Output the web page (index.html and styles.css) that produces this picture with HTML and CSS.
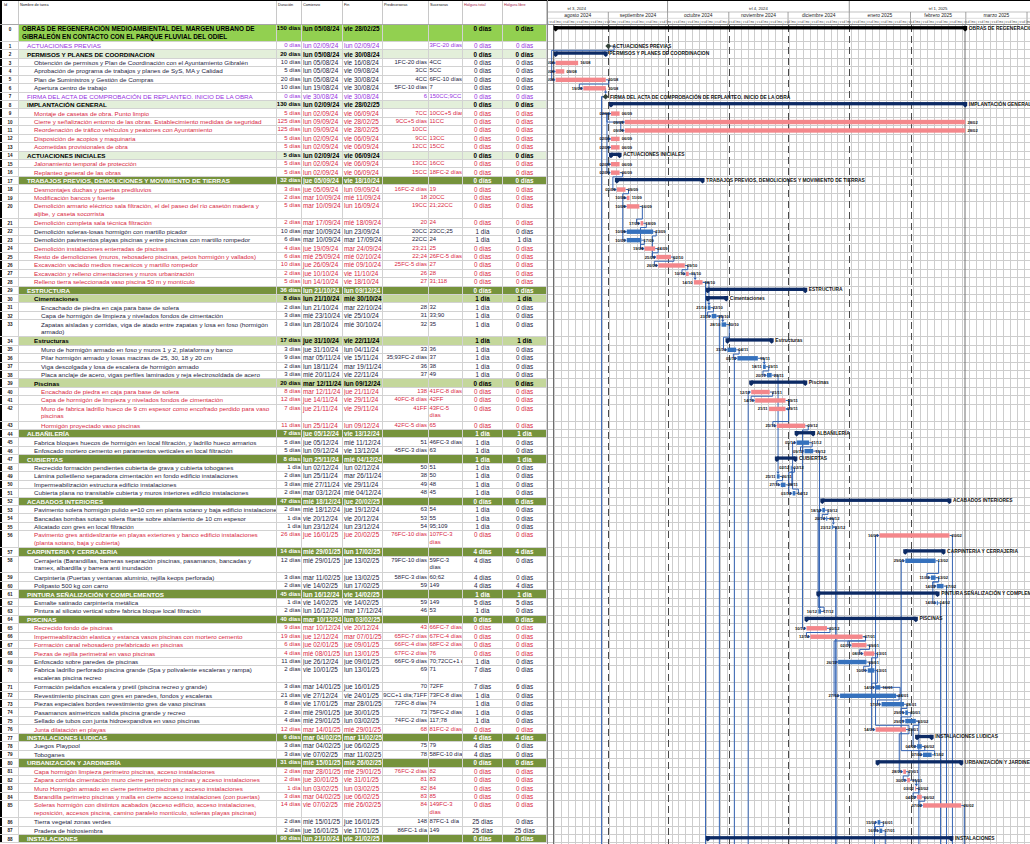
FILE: index.html
```html
<!DOCTYPE html>
<html lang="es">
<head>
<meta charset="utf-8">
<title>Diagrama de Gantt</title>
<link rel="stylesheet" href="styles.css">
</head>
<body>
<div class="page">
<div class="table">
<div class="head"><span class="hid">Id</span><span>Nombre de tarea</span><span>Duración</span><span>Comienzo</span><span>Fin</span><span>Predecesoras</span><span>Sucesoras</span><span class="hred">Holgura total</span><span class="hred">Holgura libre</span></div>
<div class="row sum0 r2"><span class="c id">0</span><span class="c nm l0">OBRAS DE REGENERACIÓN MEDIOAMBIENTAL DEL MARGEN URBANO DE <br>GIBRALEÓN EN CONTACTO CON EL PARQUE FLUVIAL DEL ODIEL</span><span class="c du">150 días</span><span class="c st">lun 05/08/24</span><span class="c en">vie 28/02/25</span><span class="c pr"></span><span class="c su"></span><span class="c ht">0 días</span><span class="c hl">0 días</span></div>
<div class="row mile" data-mx="61.3"><span class="c id">1</span><span class="c nm l1">ACTUACIONES PREVIAS</span><span class="c du">0 días</span><span class="c st">lun 02/09/24</span><span class="c en">lun 02/09/24</span><span class="c pr"></span><span class="c su">3FC-20 días</span><span class="c ht">0 días</span><span class="c hl">0 días</span></div>
<div class="row sumL"><span class="c id">2</span><span class="c nm l1">PERMISOS Y PLANES DE COORDINACION</span><span class="c du">20 días</span><span class="c st">lun 05/08/24</span><span class="c en">vie 30/08/24</span><span class="c pr"></span><span class="c su"></span><span class="c ht">0 días</span><span class="c hl">0 días</span></div>
<div class="row task"><span class="c id">3</span><span class="c nm l2">Obtención de permisos y Plan de Coordinación con el Ayuntamiento Gibralén</span><span class="c du">10 días</span><span class="c st">lun 05/08/24</span><span class="c en">vie 16/08/24</span><span class="c pr">1FC-20 días</span><span class="c su">4CC</span><span class="c ht">0 días</span><span class="c hl">0 días</span></div>
<div class="row task"><span class="c id">4</span><span class="c nm l2">Aprobación de programa de trabajos y planes de SyS, MA y Calidad</span><span class="c du">5 días</span><span class="c st">lun 05/08/24</span><span class="c en">vie 09/08/24</span><span class="c pr">3CC</span><span class="c su">5CC</span><span class="c ht">0 días</span><span class="c hl">0 días</span></div>
<div class="row task"><span class="c id">5</span><span class="c nm l2">Plan de Suministros y Gestión de Compras</span><span class="c du">20 días</span><span class="c st">lun 05/08/24</span><span class="c en">vie 30/08/24</span><span class="c pr">4CC</span><span class="c su">6FC-10 días</span><span class="c ht">0 días</span><span class="c hl">0 días</span></div>
<div class="row task"><span class="c id">6</span><span class="c nm l2">Apertura centro de trabajo</span><span class="c du">10 días</span><span class="c st">lun 19/08/24</span><span class="c en">vie 30/08/24</span><span class="c pr">5FC-10 días</span><span class="c su">7</span><span class="c ht">0 días</span><span class="c hl">0 días</span></div>
<div class="row mile" data-mx="58.6"><span class="c id">7</span><span class="c nm l1">FIRMA DEL ACTA DE COMPROBACIÓN DE REPLANTEO. INICIO DE LA OBRA</span><span class="c du">0 días</span><span class="c st">vie 30/08/24</span><span class="c en">vie 30/08/24</span><span class="c pr">6</span><span class="c su">150CC;9CC</span><span class="c ht">0 días</span><span class="c hl">0 días</span></div>
<div class="row sumL"><span class="c id">8</span><span class="c nm l1">IMPLANTACIÓN GENERAL</span><span class="c du">130 días</span><span class="c st">lun 02/09/24</span><span class="c en">vie 28/02/25</span><span class="c pr"></span><span class="c su"></span><span class="c ht">0 días</span><span class="c hl">0 días</span></div>
<div class="row task crit"><span class="c id">9</span><span class="c nm l2">Montaje de casetas de obra. Punto limpio</span><span class="c du">5 días</span><span class="c st">lun 02/09/24</span><span class="c en">vie 06/09/24</span><span class="c pr">7CC</span><span class="c su">10CC+5 días</span><span class="c ht">0 días</span><span class="c hl">0 días</span></div>
<div class="row task crit"><span class="c id">10</span><span class="c nm l2">Cierre y señalización entorno de las obras. Establecimiento medidas de seguridad</span><span class="c du">125 días</span><span class="c st">lun 09/09/24</span><span class="c en">vie 28/02/25</span><span class="c pr">9CC+5 días</span><span class="c su">11CC</span><span class="c ht">0 días</span><span class="c hl">0 días</span></div>
<div class="row task crit"><span class="c id">11</span><span class="c nm l2">Reordenación de tráfico vehículos y peatones con Ayuntamiento</span><span class="c du">125 días</span><span class="c st">lun 09/09/24</span><span class="c en">vie 28/02/25</span><span class="c pr">10CC</span><span class="c su"></span><span class="c ht">0 días</span><span class="c hl">0 días</span></div>
<div class="row task crit"><span class="c id">12</span><span class="c nm l2">Disposición de acopios y maquinaria</span><span class="c du">5 días</span><span class="c st">lun 02/09/24</span><span class="c en">vie 06/09/24</span><span class="c pr">9CC</span><span class="c su">13CC</span><span class="c ht">0 días</span><span class="c hl">0 días</span></div>
<div class="row task crit"><span class="c id">13</span><span class="c nm l2">Acometidas provisionales de obra</span><span class="c du">5 días</span><span class="c st">lun 02/09/24</span><span class="c en">vie 06/09/24</span><span class="c pr">12CC</span><span class="c su">15CC</span><span class="c ht">0 días</span><span class="c hl">0 días</span></div>
<div class="row sumL"><span class="c id">14</span><span class="c nm l1">ACTUACIONES INICIALES</span><span class="c du">5 días</span><span class="c st">lun 02/09/24</span><span class="c en">vie 06/09/24</span><span class="c pr"></span><span class="c su"></span><span class="c ht">0 días</span><span class="c hl">0 días</span></div>
<div class="row task crit"><span class="c id">15</span><span class="c nm l2">Jalonamiento temporal de protección</span><span class="c du">5 días</span><span class="c st">lun 02/09/24</span><span class="c en">vie 06/09/24</span><span class="c pr">13CC</span><span class="c su">16CC</span><span class="c ht">0 días</span><span class="c hl">0 días</span></div>
<div class="row task crit"><span class="c id">16</span><span class="c nm l2">Replanteo general de las obras</span><span class="c du">5 días</span><span class="c st">lun 02/09/24</span><span class="c en">vie 06/09/24</span><span class="c pr">15CC</span><span class="c su">18FC-2 días</span><span class="c ht">0 días</span><span class="c hl">0 días</span></div>
<div class="row sumD"><span class="c id">17</span><span class="c nm l1">TRABAJOS PREVIOS, DEMOLICIONES Y MOVIMIENTO DE TIERRAS</span><span class="c du">32 días</span><span class="c st">jue 05/09/24</span><span class="c en">vie 18/10/24</span><span class="c pr"></span><span class="c su"></span><span class="c ht">0 días</span><span class="c hl">0 días</span></div>
<div class="row task crit"><span class="c id">18</span><span class="c nm l2">Desmontajes duchas y puertas prediluvios</span><span class="c du">3 días</span><span class="c st">jue 05/09/24</span><span class="c en">lun 09/09/24</span><span class="c pr">16FC-2 días</span><span class="c su">19</span><span class="c ht">0 días</span><span class="c hl">0 días</span></div>
<div class="row task crit"><span class="c id">19</span><span class="c nm l2">Modificación bancos y fuente</span><span class="c du">2 días</span><span class="c st">mar 10/09/24</span><span class="c en">mié 11/09/24</span><span class="c pr">18</span><span class="c su">20CC</span><span class="c ht">0 días</span><span class="c hl">0 días</span></div>
<div class="row task crit r2"><span class="c id">20</span><span class="c nm l2">Demolición armario eléctrico sala filtración, el del paseo del río casetón madera y <br>aljibe, y caseta socorrista</span><span class="c du">5 días</span><span class="c st">mar 10/09/24</span><span class="c en">lun 16/09/24</span><span class="c pr">19CC</span><span class="c su">21;22CC</span><span class="c ht">0 días</span><span class="c hl">0 días</span></div>
<div class="row task crit"><span class="c id">21</span><span class="c nm l2">Demolición completa sala técnica filtración</span><span class="c du">2 días</span><span class="c st">mar 17/09/24</span><span class="c en">mié 18/09/24</span><span class="c pr">20</span><span class="c su">24</span><span class="c ht">0 días</span><span class="c hl">0 días</span></div>
<div class="row task"><span class="c id">22</span><span class="c nm l2">Demolición soleras-losas hormigón con martillo picador</span><span class="c du">10 días</span><span class="c st">mar 10/09/24</span><span class="c en">lun 23/09/24</span><span class="c pr">20CC</span><span class="c su">23CC;25</span><span class="c ht">1 día</span><span class="c hl">0 días</span></div>
<div class="row task"><span class="c id">23</span><span class="c nm l2">Demolición pavimentos playas piscinas y entre piscinas con martillo rompedor</span><span class="c du">6 días</span><span class="c st">mar 10/09/24</span><span class="c en">mar 17/09/24</span><span class="c pr">22CC</span><span class="c su">24</span><span class="c ht">1 día</span><span class="c hl">1 día</span></div>
<div class="row task crit"><span class="c id">24</span><span class="c nm l2">Demolición instalaciones enterradas de piscinas</span><span class="c du">4 días</span><span class="c st">jue 19/09/24</span><span class="c en">mar 24/09/24</span><span class="c pr">23;21</span><span class="c su">25</span><span class="c ht">0 días</span><span class="c hl">0 días</span></div>
<div class="row task crit"><span class="c id">25</span><span class="c nm l2">Resto de demoliciones (muros, rebosadero piscinas, petos hormigón y vallados)</span><span class="c du">6 días</span><span class="c st">mié 25/09/24</span><span class="c en">mié 02/10/24</span><span class="c pr">22;24</span><span class="c su">26FC-5 días</span><span class="c ht">0 días</span><span class="c hl">0 días</span></div>
<div class="row task crit"><span class="c id">26</span><span class="c nm l2">Excavación vaciado medios mecanicos y martillo rompedor</span><span class="c du">10 días</span><span class="c st">jue 26/09/24</span><span class="c en">mié 09/10/24</span><span class="c pr">25FC-5 días</span><span class="c su">27</span><span class="c ht">0 días</span><span class="c hl">0 días</span></div>
<div class="row task crit"><span class="c id">27</span><span class="c nm l2">Excavación y relleno cimentaciones y muros urbanización</span><span class="c du">2 días</span><span class="c st">jue 10/10/24</span><span class="c en">vie 11/10/24</span><span class="c pr">26</span><span class="c su">28</span><span class="c ht">0 días</span><span class="c hl">0 días</span></div>
<div class="row task crit"><span class="c id">28</span><span class="c nm l2">Relleno tierra seleccionada vaso piscina 50 m y montículo</span><span class="c du">5 días</span><span class="c st">lun 14/10/24</span><span class="c en">vie 18/10/24</span><span class="c pr">27</span><span class="c su">31;118</span><span class="c ht">0 días</span><span class="c hl">0 días</span></div>
<div class="row sumD"><span class="c id">29</span><span class="c nm l1">ESTRUCTURA</span><span class="c du">36 días</span><span class="c st">lun 21/10/24</span><span class="c en">lun 09/12/24</span><span class="c pr"></span><span class="c su"></span><span class="c ht">0 días</span><span class="c hl">0 días</span></div>
<div class="row sumM"><span class="c id">30</span><span class="c nm l2">Cimentaciones</span><span class="c du">8 días</span><span class="c st">lun 21/10/24</span><span class="c en">mié 30/10/24</span><span class="c pr"></span><span class="c su"></span><span class="c ht">1 día</span><span class="c hl">1 día</span></div>
<div class="row task"><span class="c id">31</span><span class="c nm l3">Encachado de piedra en caja para base de solera</span><span class="c du">2 días</span><span class="c st">lun 21/10/24</span><span class="c en">mar 22/10/24</span><span class="c pr">28</span><span class="c su">32</span><span class="c ht">1 día</span><span class="c hl">0 días</span></div>
<div class="row task"><span class="c id">32</span><span class="c nm l3">Capa de hormigón de limpieza y nivelados fondos de cimentación</span><span class="c du">3 días</span><span class="c st">mié 23/10/24</span><span class="c en">vie 25/10/24</span><span class="c pr">31</span><span class="c su">33;90</span><span class="c ht">1 día</span><span class="c hl">0 días</span></div>
<div class="row task r2"><span class="c id">33</span><span class="c nm l3">Zapatas aisladas y corridas, viga de atado entre zapatas y losa en foso (hormigón <br>armado)</span><span class="c du">3 días</span><span class="c st">lun 28/10/24</span><span class="c en">mié 30/10/24</span><span class="c pr">32</span><span class="c su">35</span><span class="c ht">1 día</span><span class="c hl">0 días</span></div>
<div class="row sumM"><span class="c id">34</span><span class="c nm l2">Estructuras</span><span class="c du">17 días</span><span class="c st">jue 31/10/24</span><span class="c en">vie 22/11/24</span><span class="c pr"></span><span class="c su"></span><span class="c ht">1 día</span><span class="c hl">1 día</span></div>
<div class="row task"><span class="c id">35</span><span class="c nm l3">Muro de hormigón armado en foso y muros 1 y 2, plataforma y banco</span><span class="c du">3 días</span><span class="c st">jue 31/10/24</span><span class="c en">lun 04/11/24</span><span class="c pr">33</span><span class="c su">36</span><span class="c ht">1 día</span><span class="c hl">0 días</span></div>
<div class="row task"><span class="c id">36</span><span class="c nm l3">Pilar hormigón armado y losas macizas de 25, 30, 18 y 20 cm</span><span class="c du">9 días</span><span class="c st">mar 05/11/24</span><span class="c en">vie 15/11/24</span><span class="c pr">35;93FC-2 días</span><span class="c su">37</span><span class="c ht">1 día</span><span class="c hl">0 días</span></div>
<div class="row task"><span class="c id">37</span><span class="c nm l3">Viga descolgada y losa de escalera de hormigón armado</span><span class="c du">2 días</span><span class="c st">lun 18/11/24</span><span class="c en">mar 19/11/24</span><span class="c pr">36</span><span class="c su">38</span><span class="c ht">1 día</span><span class="c hl">0 días</span></div>
<div class="row task"><span class="c id">38</span><span class="c nm l3">Placa anclaje de acero, vigas perfiles laminados y reja electrosoldada de acero</span><span class="c du">3 días</span><span class="c st">mié 20/11/24</span><span class="c en">vie 22/11/24</span><span class="c pr">37</span><span class="c su">49</span><span class="c ht">1 día</span><span class="c hl">0 días</span></div>
<div class="row sumM"><span class="c id">39</span><span class="c nm l2">Piscinas</span><span class="c du">20 días</span><span class="c st">mar 12/11/24</span><span class="c en">lun 09/12/24</span><span class="c pr"></span><span class="c su"></span><span class="c ht">0 días</span><span class="c hl">0 días</span></div>
<div class="row task crit"><span class="c id">40</span><span class="c nm l3">Encachado de piedra en caja para base de solera</span><span class="c du">8 días</span><span class="c st">mar 12/11/24</span><span class="c en">jue 21/11/24</span><span class="c pr">138</span><span class="c su">41FC-8 días</span><span class="c ht">0 días</span><span class="c hl">0 días</span></div>
<div class="row task crit"><span class="c id">41</span><span class="c nm l3">Capa de hormigón de limpieza y nivelados fondos de cimentación</span><span class="c du">12 días</span><span class="c st">jue 14/11/24</span><span class="c en">vie 29/11/24</span><span class="c pr">40FC-8 días</span><span class="c su">42FF</span><span class="c ht">0 días</span><span class="c hl">0 días</span></div>
<div class="row task crit r2"><span class="c id">42</span><span class="c nm l3">Muro de fabrica ladrillo hueco de 9 cm espesor como encofrado perdido para vaso <br>piscinas</span><span class="c du">7 días</span><span class="c st">jue 21/11/24</span><span class="c en">vie 29/11/24</span><span class="c pr">41FF</span><span class="c su">43FC-5<br>días</span><span class="c ht">0 días</span><span class="c hl">0 días</span></div>
<div class="row task crit"><span class="c id">43</span><span class="c nm l3">Hormigón proyectado vaso piscinas</span><span class="c du">11 días</span><span class="c st">lun 25/11/24</span><span class="c en">lun 09/12/24</span><span class="c pr">42FC-5 días</span><span class="c su">65</span><span class="c ht">0 días</span><span class="c hl">0 días</span></div>
<div class="row sumD"><span class="c id">44</span><span class="c nm l1">ALBAÑILERÍA</span><span class="c du">7 días</span><span class="c st">jue 05/12/24</span><span class="c en">vie 13/12/24</span><span class="c pr"></span><span class="c su"></span><span class="c ht">1 día</span><span class="c hl">1 día</span></div>
<div class="row task"><span class="c id">45</span><span class="c nm l2">Fabrica bloques huecos de hormigón en local filtración, y ladrillo hueco armarios</span><span class="c du">5 días</span><span class="c st">jue 05/12/24</span><span class="c en">mié 11/12/24</span><span class="c pr">51</span><span class="c su">46FC-3 días</span><span class="c ht">1 día</span><span class="c hl">0 días</span></div>
<div class="row task"><span class="c id">46</span><span class="c nm l2">Enfoscado mortero cemento en paramentos verticales en local filtración</span><span class="c du">5 días</span><span class="c st">lun 09/12/24</span><span class="c en">vie 13/12/24</span><span class="c pr">45FC-3 días</span><span class="c su">63</span><span class="c ht">1 día</span><span class="c hl">0 días</span></div>
<div class="row sumD"><span class="c id">47</span><span class="c nm l1">CUBIERTAS</span><span class="c du">8 días</span><span class="c st">lun 25/11/24</span><span class="c en">mié 04/12/24</span><span class="c pr"></span><span class="c su"></span><span class="c ht">1 día</span><span class="c hl">1 día</span></div>
<div class="row task"><span class="c id">48</span><span class="c nm l2">Recrecido formación pendientes cubierta de grava y cubierta toboganes</span><span class="c du">1 día</span><span class="c st">lun 02/12/24</span><span class="c en">lun 02/12/24</span><span class="c pr">50</span><span class="c su">51</span><span class="c ht">1 día</span><span class="c hl">0 días</span></div>
<div class="row task"><span class="c id">49</span><span class="c nm l2">Lámina polietileno separadora cimentación en fondo edificio instalaciones</span><span class="c du">2 días</span><span class="c st">lun 25/11/24</span><span class="c en">mar 26/11/24</span><span class="c pr">38</span><span class="c su">50</span><span class="c ht">1 día</span><span class="c hl">0 días</span></div>
<div class="row task"><span class="c id">50</span><span class="c nm l2">Impermeabilización estructura edificio instalaciones</span><span class="c du">3 días</span><span class="c st">mié 27/11/24</span><span class="c en">vie 29/11/24</span><span class="c pr">49</span><span class="c su">48</span><span class="c ht">1 día</span><span class="c hl">0 días</span></div>
<div class="row task"><span class="c id">51</span><span class="c nm l2">Cubierta plana no transitable cubierta y muros interiores edificio instalaciones</span><span class="c du">2 días</span><span class="c st">mar 03/12/24</span><span class="c en">mié 04/12/24</span><span class="c pr">48</span><span class="c su">45</span><span class="c ht">1 día</span><span class="c hl">0 días</span></div>
<div class="row sumD"><span class="c id">52</span><span class="c nm l1">ACABADOS INTERIORES</span><span class="c du">47 días</span><span class="c st">mié 18/12/24</span><span class="c en">jue 20/02/25</span><span class="c pr"></span><span class="c su"></span><span class="c ht">0 días</span><span class="c hl">0 días</span></div>
<div class="row task"><span class="c id">53</span><span class="c nm l2">Pavimento solera hormigón pulido e=10 cm en planta sotano y baja edificio instalaciones</span><span class="c du">2 días</span><span class="c st">mié 18/12/24</span><span class="c en">jue 19/12/24</span><span class="c pr">63</span><span class="c su">54</span><span class="c ht">1 día</span><span class="c hl">0 días</span></div>
<div class="row task"><span class="c id">54</span><span class="c nm l2">Bancadas bombas sotano solera fltante sobre aislamiento de 10 cm espesor</span><span class="c du">1 día</span><span class="c st">vie 20/12/24</span><span class="c en">vie 20/12/24</span><span class="c pr">53</span><span class="c su">55</span><span class="c ht">1 día</span><span class="c hl">0 días</span></div>
<div class="row task"><span class="c id">55</span><span class="c nm l2">Alicatado con gres en local filtración</span><span class="c du">1 día</span><span class="c st">lun 23/12/24</span><span class="c en">lun 23/12/24</span><span class="c pr">54</span><span class="c su">95;109</span><span class="c ht">1 día</span><span class="c hl">0 días</span></div>
<div class="row task crit r2"><span class="c id">56</span><span class="c nm l2">Pavimento gres antideslizante en playas exteriores y banco edificio instalaciones <br>(planta sotano, baja y cubierta)</span><span class="c du">26 días</span><span class="c st">jue 16/01/25</span><span class="c en">jue 20/02/25</span><span class="c pr">76FC-10 días</span><span class="c su">107FC-3<br>días</span><span class="c ht">0 días</span><span class="c hl">0 días</span></div>
<div class="row sumD"><span class="c id">57</span><span class="c nm l1">CARPINTERIA Y CERRAJERIA</span><span class="c du">14 días</span><span class="c st">mié 29/01/25</span><span class="c en">lun 17/02/25</span><span class="c pr"></span><span class="c su"></span><span class="c ht">4 días</span><span class="c hl">4 días</span></div>
<div class="row task r2"><span class="c id">58</span><span class="c nm l2">Cerrajería (Barandillas, barreras separación piscinas, pasamanos, bancadas y <br>tramex, albardilla y barrera anti inundación</span><span class="c du">12 días</span><span class="c st">mié 29/01/25</span><span class="c en">jue 13/02/25</span><span class="c pr">79FC-10 días</span><span class="c su">59FC-3<br>días</span><span class="c ht">4 días</span><span class="c hl">0 días</span></div>
<div class="row task"><span class="c id">59</span><span class="c nm l2">Carpintería (Puertas y ventanas aluminio, rejilla keops perforada)</span><span class="c du">3 días</span><span class="c st">mar 11/02/25</span><span class="c en">jue 13/02/25</span><span class="c pr">58FC-3 días</span><span class="c su">60;62</span><span class="c ht">4 días</span><span class="c hl">0 días</span></div>
<div class="row task"><span class="c id">60</span><span class="c nm l2">Polipasto 500 kg con carro</span><span class="c du">2 días</span><span class="c st">vie 14/02/25</span><span class="c en">lun 17/02/25</span><span class="c pr">59</span><span class="c su">149</span><span class="c ht">4 días</span><span class="c hl">4 días</span></div>
<div class="row sumD"><span class="c id">61</span><span class="c nm l1">PINTURA SEÑALIZACIÓN Y COMPLEMENTOS</span><span class="c du">45 días</span><span class="c st">lun 16/12/24</span><span class="c en">vie 14/02/25</span><span class="c pr"></span><span class="c su"></span><span class="c ht">1 día</span><span class="c hl">1 día</span></div>
<div class="row task"><span class="c id">62</span><span class="c nm l2">Esmalte satinado carpintería metálica</span><span class="c du">1 día</span><span class="c st">vie 14/02/25</span><span class="c en">vie 14/02/25</span><span class="c pr">59</span><span class="c su">149</span><span class="c ht">5 días</span><span class="c hl">5 días</span></div>
<div class="row task"><span class="c id">63</span><span class="c nm l2">Pintura al silicato vertical sobre fabrica bloque local filtración</span><span class="c du">2 días</span><span class="c st">lun 16/12/24</span><span class="c en">mar 17/12/24</span><span class="c pr">46</span><span class="c su">53</span><span class="c ht">1 día</span><span class="c hl">0 días</span></div>
<div class="row sumD"><span class="c id">64</span><span class="c nm l1">PISCINAS</span><span class="c du">40 días</span><span class="c st">mar 10/12/24</span><span class="c en">lun 03/02/25</span><span class="c pr"></span><span class="c su"></span><span class="c ht">0 días</span><span class="c hl">0 días</span></div>
<div class="row task crit"><span class="c id">65</span><span class="c nm l2">Recrecido fondo de piscinas</span><span class="c du">9 días</span><span class="c st">mar 10/12/24</span><span class="c en">vie 20/12/24</span><span class="c pr">43</span><span class="c su">66FC-7 días</span><span class="c ht">0 días</span><span class="c hl">0 días</span></div>
<div class="row task crit"><span class="c id">66</span><span class="c nm l2">Impermeabilización elastica y estanca vasos piscinas con mortero cemento</span><span class="c du">19 días</span><span class="c st">jue 12/12/24</span><span class="c en">mar 07/01/25</span><span class="c pr">65FC-7 días</span><span class="c su">67FC-4 días</span><span class="c ht">0 días</span><span class="c hl">0 días</span></div>
<div class="row task crit"><span class="c id">67</span><span class="c nm l2">Formación canal rebosadero prefabricado en piscinas</span><span class="c du">6 días</span><span class="c st">jue 02/01/25</span><span class="c en">jue 09/01/25</span><span class="c pr">66FC-4 días</span><span class="c su">68FC-2 días</span><span class="c ht">0 días</span><span class="c hl">0 días</span></div>
<div class="row task crit"><span class="c id">68</span><span class="c nm l2">Piezas de rejilla perimetral en vaso piscinas</span><span class="c du">4 días</span><span class="c st">mié 08/01/25</span><span class="c en">lun 13/01/25</span><span class="c pr">67FC-2 días</span><span class="c su">76</span><span class="c ht">0 días</span><span class="c hl">0 días</span></div>
<div class="row task"><span class="c id">69</span><span class="c nm l2">Enfoscado sobre paredes de piscinas</span><span class="c du">11 días</span><span class="c st">jue 26/12/24</span><span class="c en">jue 09/01/25</span><span class="c pr">66FC-9 días</span><span class="c su">70;72CC+1 día</span><span class="c ht">1 día</span><span class="c hl">0 días</span></div>
<div class="row task r2"><span class="c id">70</span><span class="c nm l2">Fabrica ladrillo perforado piscina grande (Spa y polivalente escaleras y rampa) <br>escaleras piscina recreo</span><span class="c du">2 días</span><span class="c st">vie 10/01/25</span><span class="c en">lun 13/01/25</span><span class="c pr">69</span><span class="c su">71</span><span class="c ht">7 días</span><span class="c hl">0 días</span></div>
<div class="row task"><span class="c id">71</span><span class="c nm l2">Formación peldaños escalera y pretil (piscina recreo y grande)</span><span class="c du">3 días</span><span class="c st">mar 14/01/25</span><span class="c en">jue 16/01/25</span><span class="c pr">70</span><span class="c su">72FF</span><span class="c ht">7 días</span><span class="c hl">6 días</span></div>
<div class="row task"><span class="c id">72</span><span class="c nm l2">Revestimiento piscinas con gres en paredes, fondos y escaleras</span><span class="c du">21 días</span><span class="c st">vie 27/12/24</span><span class="c en">vie 24/01/25</span><span class="c pr">69CC+1 día;71FF</span><span class="c su">73FC-8 días</span><span class="c ht">1 día</span><span class="c hl">0 días</span></div>
<div class="row task"><span class="c id">73</span><span class="c nm l2">Piezas especiales bordes revestimiento gres de vaso piscinas</span><span class="c du">8 días</span><span class="c st">vie 17/01/25</span><span class="c en">mar 28/01/25</span><span class="c pr">72FC-8 días</span><span class="c su">74</span><span class="c ht">1 día</span><span class="c hl">0 días</span></div>
<div class="row task"><span class="c id">74</span><span class="c nm l2">Pasamanos asimetricos salida piscina grande y recreo</span><span class="c du">2 días</span><span class="c st">mié 29/01/25</span><span class="c en">jue 30/01/25</span><span class="c pr">73</span><span class="c su">75FC-2 días</span><span class="c ht">1 día</span><span class="c hl">0 días</span></div>
<div class="row task"><span class="c id">75</span><span class="c nm l2">Sellado de tubos con junta hidroexpandiva en vaso piscinas</span><span class="c du">4 días</span><span class="c st">mié 29/01/25</span><span class="c en">lun 03/02/25</span><span class="c pr">74FC-2 días</span><span class="c su">117;78</span><span class="c ht">1 día</span><span class="c hl">0 días</span></div>
<div class="row task crit"><span class="c id">76</span><span class="c nm l2">Junta dilatación en playas</span><span class="c du">12 días</span><span class="c st">mar 14/01/25</span><span class="c en">mié 29/01/25</span><span class="c pr">68</span><span class="c su">81FC-2 días</span><span class="c ht">0 días</span><span class="c hl">0 días</span></div>
<div class="row sumD"><span class="c id">77</span><span class="c nm l1">INSTALACIONES LUDICAS</span><span class="c du">6 días</span><span class="c st">mar 04/02/25</span><span class="c en">mar 11/02/25</span><span class="c pr"></span><span class="c su"></span><span class="c ht">4 días</span><span class="c hl">4 días</span></div>
<div class="row task"><span class="c id">78</span><span class="c nm l2">Juegos Playpool</span><span class="c du">3 días</span><span class="c st">mar 04/02/25</span><span class="c en">jue 06/02/25</span><span class="c pr">75</span><span class="c su">79</span><span class="c ht">4 días</span><span class="c hl">0 días</span></div>
<div class="row task"><span class="c id">79</span><span class="c nm l2">Toboganes</span><span class="c du">3 días</span><span class="c st">vie 07/02/25</span><span class="c en">mar 11/02/25</span><span class="c pr">78</span><span class="c su">58FC-10 días</span><span class="c ht">4 días</span><span class="c hl">0 días</span></div>
<div class="row sumD"><span class="c id">80</span><span class="c nm l1">URBANIZACIÓN Y JARDINERÍA</span><span class="c du">31 días</span><span class="c st">mié 15/01/25</span><span class="c en">mié 26/02/25</span><span class="c pr"></span><span class="c su"></span><span class="c ht">0 días</span><span class="c hl">0 días</span></div>
<div class="row task crit"><span class="c id">81</span><span class="c nm l2">Capa hormigón limpieza perimetro piscinas, acceso instalaciones</span><span class="c du">2 días</span><span class="c st">mar 28/01/25</span><span class="c en">mié 29/01/25</span><span class="c pr">76FC-2 días</span><span class="c su">82</span><span class="c ht">0 días</span><span class="c hl">0 días</span></div>
<div class="row task crit"><span class="c id">82</span><span class="c nm l2">Zapara corrida cimentación muro cierre perimetro piscinas y acceso instalaciones</span><span class="c du">2 días</span><span class="c st">jue 30/01/25</span><span class="c en">vie 31/01/25</span><span class="c pr">81</span><span class="c su">83</span><span class="c ht">0 días</span><span class="c hl">0 días</span></div>
<div class="row task crit"><span class="c id">83</span><span class="c nm l2">Muro Hormigón armado en cierre perimetro piscinas y acceso instalaciones</span><span class="c du">1 día</span><span class="c st">lun 03/02/25</span><span class="c en">lun 03/02/25</span><span class="c pr">82</span><span class="c su">84</span><span class="c ht">0 días</span><span class="c hl">0 días</span></div>
<div class="row task crit"><span class="c id">84</span><span class="c nm l2">Barandilla perimetro piscinas y malla en cierre acceso instalaciones (con puertas)</span><span class="c du">3 días</span><span class="c st">mar 04/02/25</span><span class="c en">jue 06/02/25</span><span class="c pr">83</span><span class="c su">85</span><span class="c ht">0 días</span><span class="c hl">0 días</span></div>
<div class="row task crit r2"><span class="c id">85</span><span class="c nm l2">Soleras hormigón con distintos acabados (acceso edificio, acceso instalaciones, <br>reposición, accesos piscina, camino paralelo montículo, soleras playas piscinas)</span><span class="c du">14 días</span><span class="c st">vie 07/02/25</span><span class="c en">mié 26/02/25</span><span class="c pr">84</span><span class="c su">149FC-3<br>días</span><span class="c ht">0 días</span><span class="c hl">0 días</span></div>
<div class="row task"><span class="c id">86</span><span class="c nm l2">Tierra vegetal zonas verdes</span><span class="c du">2 días</span><span class="c st">mié 15/01/25</span><span class="c en">jue 16/01/25</span><span class="c pr">148</span><span class="c su">87FC-1 día</span><span class="c ht">25 días</span><span class="c hl">0 días</span></div>
<div class="row task"><span class="c id">87</span><span class="c nm l2">Pradera de hidrosiembra</span><span class="c du">2 días</span><span class="c st">jue 16/01/25</span><span class="c en">vie 17/01/25</span><span class="c pr">86FC-1 día</span><span class="c su">149</span><span class="c ht">25 días</span><span class="c hl">25 días</span></div>
<div class="row sumD"><span class="c id">88</span><span class="c nm l1">INSTALACIONES</span><span class="c du">90 días</span><span class="c st">lun 21/10/24</span><span class="c en">vie 21/02/25</span><span class="c pr"></span><span class="c su"></span><span class="c ht">0 días</span><span class="c hl">0 días</span></div>
</div>
<div class="chart"><svg id="gantt" width="483" height="844" viewBox="0 0 483 844" xmlns="http://www.w3.org/2000/svg"></svg></div>
</div>
<script src="script.js"></script>
</body>
</html>
```

FILE: styles.css
```css
* { box-sizing: border-box; }
html, body { margin: 0; padding: 0; background: #fff; overflow: hidden; }
body { width: 1030px; height: 844px; font-family: "Liberation Sans", Arial, Helvetica, sans-serif; }
.page { display: flex; width: 1030px; height: 844px; overflow: hidden; }
.table { flex: none; width: 547px; height: 844px; overflow: hidden; }
.chart { flex: none; width: 483px; height: 844px; overflow: hidden; }
.chart svg { display: block; }

.head {
  display: grid;
  grid-template-columns: 19px 258px 25px 41px 40px 46px 34px 40px 44px;
  height: 25px;
  border-top: 1px solid #000;
  border-bottom: 1px solid #a6a6a6;
  font-size: 3.8px;
  line-height: 4.4px;
  color: #111;
}
.head span { border-right: 1px solid #c8c8c8; padding: 1.5px 1px 0; white-space: nowrap; overflow: hidden; }
.head .hid { border-left: 2px solid #000; padding-left: 2px; }
.head .hred { color: #a3233f; }

.row {
  display: grid;
  grid-template-columns: 19px 258px 25px 41px 40px 46px 34px 40px 44px;
  height: 8.44px;
  border-bottom: 1px solid #d2d2d2;
  font-size: 6.25px;
  line-height: 7.4px;
  color: #1c1c40;
}
.row.r2 { height: 16.88px; }
.c { border-right: 1px solid #d2d2d2; white-space: nowrap; overflow: hidden; padding-top: 0.2px; }
.id {
  border-left: 2px solid #000;
  background: #fff;
  color: #222;
  font-size: 4.6px;
  font-weight: bold;
  text-align: center;
  padding-top: 0.8px;
}
.nm.l0 { padding-left: 3px; }
.nm.l1 { padding-left: 8px; }
.nm.l2 { padding-left: 15px; }
.nm.l3 { padding-left: 22px; }
.du { display: flex; justify-content: flex-end; padding-right: 0.5px; font-size: 6px; }
.st, .en { padding-left: 1px; font-size: 6.4px; }
.su { padding-left: 0.5px; font-size: 5.9px; }
.pr { display: flex; justify-content: flex-end; padding-right: 1px; font-size: 5.9px; }
.ht, .hl { text-align: center; font-size: 6.3px; }

.crit { color: #d81f43; }
.mile { color: #9530e0; }
.sum0 { font-weight: bold; color: #000; font-size: 6.4px; }
.sum0 .c:not(.id) { background: #92d050; }
.sumL { font-weight: bold; color: #000; }
.sumL .c:not(.id) { background: #e3efda; }
.sumM { font-weight: bold; color: #000; }
.sumM .c:not(.id) { background: #c4d79b; }
.sumD { font-weight: bold; color: #fff; }
.sumD .c:not(.id) { background: #76933c; }
```

FILE: script.js
```js
(function () {
  var PX = 1.975, X0 = 0.1, W = 483, H = 844, LC = '#3464b4';
  var base = Date.UTC(2024, 7, 1);
  var NS = 'http://www.w3.org/2000/svg';
  var svg = document.getElementById('gantt');
  function mk(tag, a, p) { var e = document.createElementNS(NS, tag); for (var k in a) e.setAttribute(k, a[k]); (p || svg).appendChild(e); return e; }
  function tx(s, a, p) { var t = mk('text', a, p); t.textContent = s; return t; }
  function dn(s) { var m = /(\d\d)\/(\d\d)\/(\d\d)/.exec(s); return m ? (Date.UTC(2000 + (+m[3]), +m[2] - 1, +m[1]) - base) / 864e5 : 0; }
  function X(d) { return X0 + d * PX; }
  var FONT = 'Liberation Sans, Arial, sans-serif';
  var gG = mk('g', { 'shape-rendering': 'crispEdges' });
  var gS = mk('g', {});
  var gL = mk('g', {});
  var gB = mk('g', {});
  var gT = mk('g', { 'font-family': FONT, 'font-weight': 'bold', fill: '#111' });
  var gH = mk('g', { 'font-family': FONT, fill: '#222' });

  var rows = document.querySelectorAll('.table .row'), T = {}, list = [];
  for (var i = 0; i < rows.length; i++) {
    var r = rows[i], c = r.children, b = r.getBoundingClientRect(), cl = r.classList;
    var o = {
      id: +c[0].textContent, top: b.top, h: b.height, yb: b.top + 4.22,
      type: cl.contains('mile') ? 'm' : cl.contains('sum0') ? 'p' : (cl.contains('sumL') || cl.contains('sumM') || cl.contains('sumD')) ? 's' : 't',
      crit: /^0\s/.test(c[7].textContent.trim()),
      name: c[1].textContent.replace(/\s+/g, ' ').trim(),
      pred: c[5].textContent.trim(), succ: c[6].textContent.trim()
    };
    var sd = dn(c[3].textContent), ed = dn(c[4].textContent);
    o.xs = X(sd + 8 / 24); o.xe = X(ed + 17 / 24);
    o.sl = (c[3].textContent.match(/\d\d\/\d\d/) || [''])[0];
    o.el = (c[4].textContent.match(/\d\d\/\d\d/) || [''])[0];
    if (o.type === 'm') { o.xs = o.xe = r.dataset.mx ? +r.dataset.mx : X(ed + 17 / 24); }
    T[o.id] = o; list.push(o);
  }

  /* grid */
  list.forEach(function (o) { var y = Math.round(o.top + o.h) - 0.5; mk('line', { x1: 0, x2: W, y1: y, y2: y, stroke: '#cdcdcd' }, gG); });
  for (var x = X0; x < W; x += 3.5 * PX) { var xx = Math.round(x) + 0.5; mk('line', { x1: xx, x2: xx, y1: 25, y2: H, stroke: '#cdcdcd' }, gG); }
  [31, 61, 92, 122, 153, 184].forEach(function (d) { var xx = Math.round(X(d)) + 0.5; mk('line', { x1: xx, x2: xx, y1: 25, y2: H, stroke: '#4a4a4a', 'stroke-width': 1, 'stroke-dasharray': '7 4' }, gS); });
  [6.5, 418].forEach(function (xx) { mk('line', { x1: xx, x2: xx, y1: 25, y2: H, stroke: '#6e6e6e', 'stroke-width': 1 }, gS); });

  /* header */
  mk('rect', { x: 0, y: 0, width: W, height: 25, fill: '#fff' }, gH);
  function hl(x1, y1, x2, y2, col, w) { mk('line', { x1: x1, y1: y1, x2: x2, y2: y2, stroke: col || '#9a9a9a', 'stroke-width': w || 0.8 }, gH); }
  hl(0, 0.5, W, 0.5, '#000', 1);
  var q = [-31, 61, 153, 243], ql = ['trl 3, 2024', 'trl 4, 2024', 'trl 1, 2025'];
  for (i = 0; i < 3; i++) tx(ql[i], { x: X((q[i] + q[i + 1]) / 2), y: 10.2, 'font-size': 4.2, 'text-anchor': 'middle' }, gH);
  hl(X(61), 1, X(61), 12, '#7a7a7a'); hl(X(153), 1, X(153), 12, '#7a7a7a');
  hl(0, 12, W, 12, '#a8a8a8', 0.7);
  var m = [0, 31, 61, 92, 122, 153, 184, 212, 243, 273];
  var ml = ['agosto 2024', 'septiembre 2024', 'octubre 2024', 'noviembre 2024', 'diciembre 2024', 'enero 2025', 'febrero 2025', 'marzo 2025', 'abril 2025'];
  for (i = 0; i < 9; i++) {
    tx(ml[i], { x: X((m[i] + m[i + 1]) / 2), y: 16.9, 'font-size': 4.9, 'text-anchor': 'middle' }, gH);
    if (i > 0) hl(X(m[i]), 12, X(m[i]), 24.5, '#8a8a8a');
  }
  hl(0, 18.3, W, 18.3, '#c6c6c6', 0.6);
  var L = 'dlmxjvs';
  for (var d = 0; d < 246; d++) tx(L[(4 + d) % 7], { x: X(d + 0.5), y: 23.1, 'font-size': 2.7, 'text-anchor': 'middle', fill: '#333' }, gH);
  hl(0, 24.5, W, 24.5, '#8c8c8c', 1);
  mk('line', { x1: 0.5, y1: 0, x2: 0.5, y2: H, stroke: '#8c8c8c', 'stroke-width': 1 });

  /* links */
  function P(dd) { mk('path', { d: dd, fill: 'none', stroke: LC, 'stroke-width': 1 }, gL); }
  function A(x, y, dir) {
    var a = 2.4, bb = 1.6, p;
    if (dir === 'r') p = [x, y, x - a, y - bb, x - a, y + bb];
    else if (dir === 'l') p = [x, y, x + a, y - bb, x + a, y + bb];
    else if (dir === 'd') p = [x, y, x - bb, y - a, x + bb, y - a];
    else p = [x, y, x - bb, y + a, x + bb, y + a];
    mk('polygon', { points: p.join(' '), fill: LC }, gL);
  }
  function endX(o) { return o.type === 'm' ? o.xe + 2.8 : o.xe; }
  function parse(s) {
    return s.split(';').map(function (t) { var mm = /^\s*(\d+)(FC|CC|FF|CF)?/.exec(t); return mm ? { id: +mm[1], t: mm[2] || 'FC' } : null; }).filter(Boolean);
  }
  list.forEach(function (s) {
    parse(s.pred).forEach(function (qq) {
      var p = T[qq.id], x0, x1;
      if (!p) {
        if (s.type === 't') { var xv0 = s.xs - 3; P('M' + xv0 + ',' + H + 'V' + s.yb + 'H' + (s.xs - 2.2)); A(s.xs, s.yb, 'r'); }
        return;
      }
      if (qq.t === 'CC') {
        x0 = p.xs; x1 = s.xs; var xl = Math.min(x0, x1) - 4;
        P('M' + x0 + ',' + p.yb + 'H' + xl + 'V' + s.yb + 'H' + (x1 - 2.2)); A(x1, s.yb, 'r');
      } else if (qq.t === 'FF') {
        x0 = endX(p); x1 = s.xe; var xr = Math.max(x0, x1) + 4;
        P('M' + x0 + ',' + p.yb + 'H' + xr + 'V' + s.yb + 'H' + (x1 + 2.2)); A(x1, s.yb, 'l');
      } else {
        x0 = endX(p); x1 = s.xs; var down = s.yb > p.yb;
        if (s.type === 'm') { P('M' + x0 + ',' + p.yb + 'H' + x1 + 'V' + (s.yb - 5)); A(x1, s.yb - 2.8, 'd'); }
        else if (x1 - x0 >= 3.5) {
          var xv = x1 + 1.2, yt = down ? s.yb - 2.2 : s.yb + 2.2;
          P('M' + x0 + ',' + p.yb + 'H' + xv + 'V' + (down ? yt - 2.2 : yt + 2.2)); A(xv, yt, down ? 'd' : 'u');
        } else {
          var xr2 = x0 + 3, ym = down ? p.top + p.h : p.top, xl2 = x1 - 4;
          P('M' + x0 + ',' + p.yb + 'H' + xr2 + 'V' + ym + 'H' + xl2 + 'V' + s.yb + 'H' + (x1 - 2.2)); A(x1, s.yb, 'r');
        }
      }
    });
    parse(s.succ).forEach(function (qq) {
      if (T[qq.id] || qq.id <= 88) return;
      var x0;
      if (qq.t === 'CC') { x0 = s.xs; P('M' + x0 + ',' + s.yb + 'H' + (x0 - 4) + 'V' + H); }
      else { x0 = endX(s); P('M' + x0 + ',' + s.yb + 'H' + (x0 + 3) + 'V' + H); }
    });
  });

  /* bars and labels */
  function cap(x, y, f) { mk('path', { d: 'M' + (x - 2) + ',' + (y - 3.1) + 'H' + (x + 2) + 'V' + (y + 0.6) + 'L' + x + ',' + (y + 2.4) + 'L' + (x - 2) + ',' + (y + 0.6) + 'Z', fill: f }, gB); }
  list.forEach(function (o) {
    if (o.type === 'p' || o.type === 's') {
      var f = o.type === 'p' ? '#000' : '#0c2a64';
      mk('rect', { x: o.xs, y: o.yb - 3.1, width: o.xe - o.xs, height: 3.3, fill: f }, gB);
      cap(o.xs, o.yb, f); cap(o.xe, o.yb, f);
      tx(o.name, { x: o.xe + 3.6, y: o.yb + 0.5, 'font-size': 4.9 }, gT);
    } else if (o.type === 'm') {
      var x = o.xs, y = o.yb;
      mk('polygon', { points: [x, y - 2.9, x + 2.9, y, x, y + 2.9, x - 2.9, y].join(' '), fill: '#34443a' }, gB);
      tx(o.name, { x: x + 4.3, y: y + 1.8, 'font-size': 4.9 }, gT);
    } else {
      mk('rect', { x: o.xs, y: o.yb - 2.2, width: Math.max(o.xe - o.xs, 1), height: 4.4, fill: o.crit ? '#f4878b' : '#3571bd' }, gB);
      tx(o.sl, { x: o.xs - 1.3, y: o.yb + 1.5, 'font-size': 4.1, 'text-anchor': 'end' }, gT);
      tx(o.el, { x: o.xe + 2.2, y: o.yb + 1.5, 'font-size': 4.1 }, gT);
    }
  });
})();
```
